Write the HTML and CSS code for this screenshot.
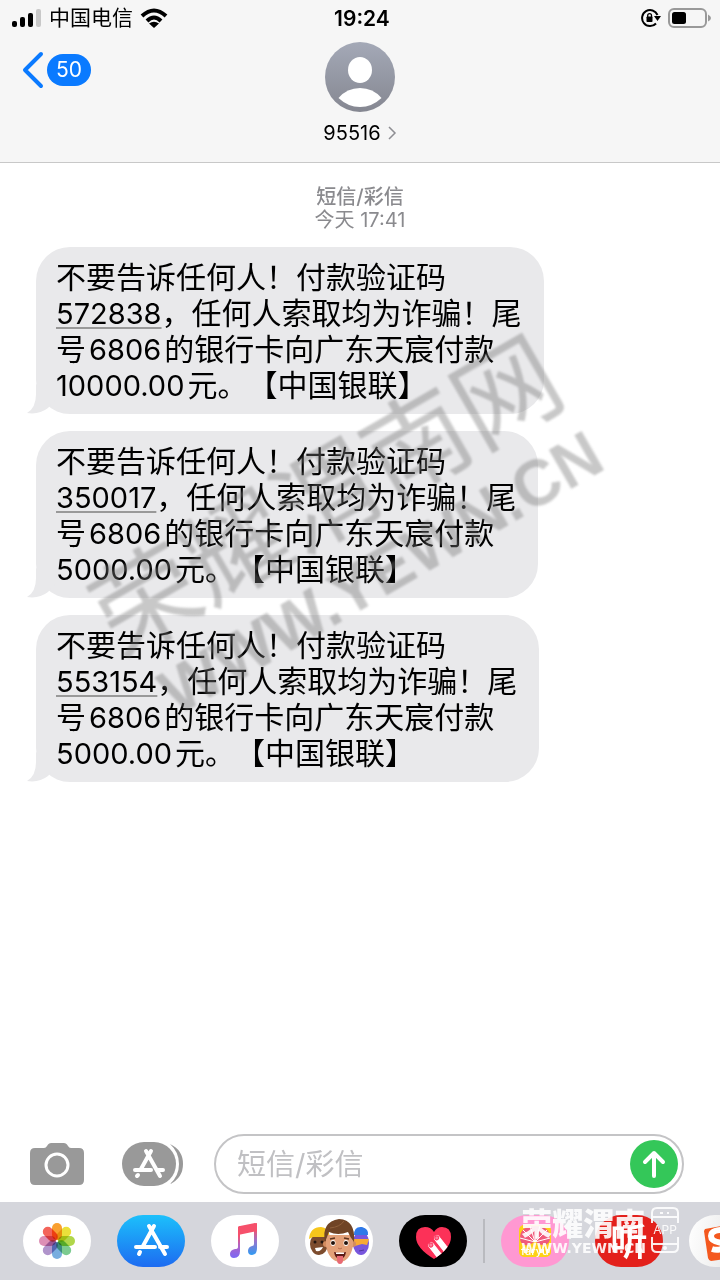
FILE: index.html
```html
<!DOCTYPE html>
<html lang="zh-CN">
<head>
    <meta charset="UTF-8">
    <meta name="viewport" content="width=device-width, initial-scale=1.0">
    <title>95516</title>
    <link rel="stylesheet" href="styles.css">
</head>
<body>
    <div class="screen">
        <header class="header">
            <!-- 状态栏 -->
            <div class="status-bar">
                <div class="status-left">
                    <svg class="signal" width="30" height="20" viewBox="0 0 30 20">
                        <rect x="0" y="13" width="5" height="6" rx="2"/>
                        <rect x="8" y="9" width="5" height="10" rx="2"/>
                        <rect x="16" y="5" width="5" height="14" rx="2"/>
                        <rect x="24" y="1" width="5" height="18" rx="2" fill="#c8c8c8"/>
                    </svg>
                    <span class="carrier">中国电信</span>
                    <svg width="28" height="20" viewBox="0 0 28 20" fill="none" stroke="#000" stroke-width="4">
                        <path d="M2 8Q14-3 26 8"/>
                        <path d="M7 13Q14 6 21 13"/>
                        <path d="M14 20L9 15.500Q14 12 19 15.500Z" fill="#000" stroke="none"/>
                    </svg>
                </div>
                <div class="clock">19:24</div>
                <div class="status-right">
                    <svg width="20" height="20" viewBox="0 0 20 20">
                        <path d="M15 15.500A8 8 0 1 1 16.500 7" fill="none" stroke="#000" stroke-width="2"/>
                        <path d="M13 8H20L16.500 13Z"/>
                        <rect x="5.500" y="8.500" width="6" height="5.500" rx="0.800"/>
                        <path d="M6.700 9V7.500a1.900 1.900 0 0 1 3.800 0V9" fill="none" stroke="#000" stroke-width="1.300"/>
                    </svg>
                    <svg width="44" height="20" viewBox="0 0 44 20">
                        <rect x="1" y="1" width="37" height="18" rx="5" fill="none" stroke="#999" stroke-width="2"/>
                        <rect x="4" y="4" width="14" height="12" rx="2.500"/>
                        <path d="M40 6.500Q43 8 43 10T40 13.500Z" fill="#999"/>
                    </svg>
                </div>
            </div>

            <!-- 导航栏 -->
            <nav class="nav-bar">
                <a class="back" href="#">
                    <svg width="22" height="38" viewBox="0 0 22 38" fill="none" stroke="#0a7aff" stroke-width="4" stroke-linecap="round" stroke-linejoin="round">
                        <path d="M19 3L3 19L19 35"/>
                    </svg>
                    <span class="unread">50</span>
                </a>
                <a class="contact" href="#">
                    <svg width="70" height="70" viewBox="0 0 70 70">
                        <defs>
                            <linearGradient id="avatar" x1="0" y1="0" x2="0" y2="1">
                                <stop offset="0" stop-color="#a4a9b7"/>
                                <stop offset="1" stop-color="#858791"/>
                            </linearGradient>
                        </defs>
                        <circle cx="35" cy="35" r="35" fill="url(#avatar)"/>
                        <ellipse cx="35" cy="28" rx="12" ry="13" fill="#fff"/>
                        <path d="M13.500 56Q22 46 35 46T56.500 56Q47 65 35 65T13.500 56Z" fill="#fff"/>
                    </svg>
                    <span class="contact-name">95516
                        <svg width="10" height="16" viewBox="0 0 10 16" fill="none" stroke="#8e8e93" stroke-width="1.500">
                            <path d="M2 2L8 8L2 14"/>
                        </svg>
                    </span>
                </a>
            </nav>
        </header>

        <!-- 短信内容 -->
        <main class="messages">
            <div class="timestamp">
                <div class="kind">短信/彩信</div>
                <div>今天 <span class="time">17:41</span></div>
            </div>
            <p class="bubble">
                不要告诉任何人！付款验证码<br>
                <a class="code" href="#">572838</a>，任何人索取均为诈骗！尾<br>
                号<span class="num">6806</span>的银行卡向广东天宸付款<br>
                <span class="num amount">10000.00</span>元。【中国银联】
            </p>
            <p class="bubble">
                不要告诉任何人！付款验证码<br>
                <a class="code" href="#">350017</a>，任何人索取均为诈骗！尾<br>
                号<span class="num">6806</span>的银行卡向广东天宸付款<br>
                <span class="num amount">5000.00</span>元。【中国银联】
            </p>
            <p class="bubble">
                不要告诉任何人！付款验证码<br>
                <a class="code" href="#">553154</a>，任何人索取均为诈骗！尾<br>
                号<span class="num">6806</span>的银行卡向广东天宸付款<br>
                <span class="num amount">5000.00</span>元。【中国银联】
            </p>
            <!-- 斜向水印 -->
            <div class="watermark">
                <div class="watermark-name">荣耀渭南网</div>
                <div class="watermark-url">WWW.YEWN.CN</div>
            </div>
        </main>

        <!-- 输入栏 -->
        <form class="compose">
            <button class="icon-button" type="button" aria-label="相机">
                <svg width="54" height="44" viewBox="0 0 54 44">
                    <path d="M5 6H14Q16 6 17 4L18 2.500Q19 1 21 1H34Q36 1 37 2.500L38 4Q39 6 41 6H49Q54 6 54 11V38Q54 43 49 43H5Q0 43 0 38V11Q0 6 5 6Z" fill="#999"/>
                    <circle cx="27" cy="23" r="11" fill="none" stroke="#fff" stroke-width="3"/>
                </svg>
            </button>
            <button class="icon-button" type="button" aria-label="应用">
                <svg width="61" height="44" viewBox="0 0 61 44">
                    <path d="M48 2Q61 8 61 22T48 42Q57 34 57 22T48 2Z" fill="#999"/>
                    <rect width="54" height="44" rx="22" fill="#999"/>
                    <g fill="none" stroke="#fff" stroke-width="4" stroke-linecap="round">
                        <path d="M24 9L38 34M29 9L19 27M13 28H29M36 28H41M16 33L15 34"/>
                    </g>
                </svg>
            </button>
            <div class="field">
                <input type="text" placeholder="短信/彩信" aria-label="短信/彩信">
                <button class="send" type="button" aria-label="发送">
                    <svg width="24" height="28" viewBox="0 0 24 28" fill="none" stroke="#fff" stroke-width="4" stroke-linecap="round" stroke-linejoin="round">
                        <path d="M12 26V3M3 12L12 3L21 12"/>
                    </svg>
                </button>
            </div>
        </form>

        <!-- 应用抽屉 -->
        <div class="drawer">
            <button class="app" aria-label="照片">
                <svg width="68" height="52" viewBox="0 0 68 52">
                    <g class="petals" transform="translate(34 26)">
                        <rect x="-5" y="-18" width="10" height="17" rx="5" fill="#f9a030"/>
                        <rect x="-5" y="-18" width="10" height="17" rx="5" fill="#ebe03a" transform="rotate(45)"/>
                        <rect x="-5" y="-18" width="10" height="17" rx="5" fill="#b0d64a" transform="rotate(90)"/>
                        <rect x="-5" y="-18" width="10" height="17" rx="5" fill="#7ccb90" transform="rotate(135)"/>
                        <rect x="-5" y="-18" width="10" height="17" rx="5" fill="#78addf" transform="rotate(180)"/>
                        <rect x="-5" y="-18" width="10" height="17" rx="5" fill="#b094cb" transform="rotate(225)"/>
                        <rect x="-5" y="-18" width="10" height="17" rx="5" fill="#dd8fb5" transform="rotate(270)"/>
                        <rect x="-5" y="-18" width="10" height="17" rx="5" fill="#f3645a" transform="rotate(315)"/>
                    </g>
                </svg>
            </button>
            <button class="app app-store" aria-label="App Store">
                <svg width="68" height="52" viewBox="0 0 68 52" fill="none" stroke="#fff" stroke-width="4" stroke-linecap="round">
                    <path d="M32 11L48 39M37 11L26 31M19 32H38M43 32H50M23 37L22 39"/>
                </svg>
            </button>
            <button class="app" aria-label="音乐">
                <svg width="68" height="52" viewBox="0 0 68 52">
                    <defs>
                        <linearGradient id="note" x1="0" y1="0" x2="0" y2="1">
                            <stop offset="0.300" stop-color="#f6506b"/>
                            <stop offset="0.600" stop-color="#b163c4"/>
                            <stop offset="1" stop-color="#7b68f5"/>
                        </linearGradient>
                        <linearGradient id="note-right" x1="0" y1="0" x2="0" y2="1">
                            <stop offset="0.200" stop-color="#f6506b"/>
                            <stop offset="0.550" stop-color="#9b73cc"/>
                            <stop offset="1" stop-color="#2f9bf3"/>
                        </linearGradient>
                    </defs>
                    <path d="M27 12L29 11V36Q29 43 23 43Q19 43 19 39T24 34Q27 34 27 32Z" fill="url(#note)"/>
                    <path d="M43 9L46 8V33Q46 40 41 40Q37 40 37 36T41 31Q43 31 43 29Z" fill="url(#note-right)"/>
                    <path d="M27 13Q27 11 29 11L44 8Q46 8 46 10V16L27 20Z" fill="#f6506b"/>
                </svg>
            </button>
            <button class="app" aria-label="拟我表情">
                <svg width="68" height="52" viewBox="0 0 68 52">
                    <ellipse cx="14" cy="29" rx="9" ry="11" fill="#7d4c2e"/>
                    <path d="M4 24Q5 12 16 12Q23 12 25 22L8 22Z" fill="#f7c61b"/>
                    <circle cx="10" cy="27" r="1.500" fill="#221510"/>
                    <circle cx="17" cy="27" r="1.500" fill="#221510"/>
                    <path d="M10 33L18 32Q16 37 11 36Z" fill="#fff"/>
                    <ellipse cx="56" cy="28" rx="8" ry="12" fill="#7856dd"/>
                    <path d="M49 20Q49 11 57 12Q64 14 63 20Z" fill="#2f79e8"/>
                    <path d="M48 24L64 24L62 30L57 29L50 31Z" fill="#f8aa35"/>
                    <path d="M54 36L59 35" stroke="#5136a0"/>
                    <circle cx="21" cy="29" r="3" fill="#d38c60"/>
                    <circle cx="48" cy="29" r="3" fill="#d38c60"/>
                    <path d="M21 20H48V31Q45 46 35 47Q24 46 21 31Z" fill="#e3a078"/>
                    <path d="M20 27Q16 7 34 4Q51 5 49 27Q45 22 43 17Q33 21 24 17Z" fill="#704426"/>
                    <path d="M25 13Q35 12 39 6" fill="none" stroke="#90603c"/>
                    <path d="M25 24L30 23M39 23L44 24" stroke="#5a321d" stroke-width="1.500"/>
                    <ellipse cx="28" cy="28" rx="2.500" ry="3" fill="#fff"/>
                    <ellipse cx="41" cy="28" rx="2.500" ry="3" fill="#fff"/>
                    <circle cx="28" cy="28" r="2" fill="#23130b"/>
                    <circle cx="41" cy="28" r="2" fill="#23130b"/>
                    <path d="M33 33Q35 35 37 33" fill="none" stroke="#b96d4c"/>
                    <path d="M29 37Q35 39 41 37Q40 44 35 44T29 37Z" fill="#5b1a16"/>
                    <path d="M31 37.500H39V39H31Z" fill="#fff"/>
                    <path d="M32 41H38V45Q38 49 35 49T32 45Z" fill="#e86a73"/>
                </svg>
            </button>
            <button class="app app-touch" aria-label="Digital Touch">
                <svg width="68" height="52" viewBox="0 0 68 52">
                    <clipPath id="heart"><path d="M35 44Q17 33 17 22Q17 12 26 12Q32 12 35 17Q38 12 43 12Q52 12 52 22Q52 33 35 44Z"/></clipPath>
                    <g clip-path="url(#heart)">
                        <rect width="68" height="52" fill="#fc3158"/>
                        <g transform="rotate(-38 38 24)" fill="#fff" stroke="#fc3158">
                            <rect x="35" y="20" width="7" height="30" rx="3.500"/>
                            <rect x="26" y="22" width="7" height="28" rx="3.500"/>
                            <rect x="36.500" y="21" width="4" height="4" rx="2" fill="#ff7d9c"/>
                            <rect x="27.500" y="23" width="4" height="4" rx="2" fill="#ff7d9c"/>
                        </g>
                    </g>
                </svg>
            </button>
            <div class="divider"></div>
            <button class="app app-pink" aria-label="美图">
                <svg width="68" height="52" viewBox="0 0 68 52">
                    <rect x="18" y="10" width="32" height="32" rx="5" fill="#fdd116"/>
                    <path d="M19 23Q19 11 34 11T49 23Q49 30 42 30Q38 30 34 26Q29 31 24 30Q19 29 19 23Z" fill="#f05a7c"/>
                    <path d="M34 27L22 15M34 27L29 11M34 27L39 11M34 27L46 15M34 27L19 23M34 27L49 23" stroke="#fff"/>
                </svg>
                <span class="label-pink">faryu</span>
            </button>
            <button class="app app-red" aria-label="喜马拉雅">
                <span class="label-red">听</span>
            </button>
            <button class="app app-sogou" aria-label="搜狗">
                <svg width="68" height="52" viewBox="0 0 68 52">
                    <path d="M16 14L50 8V42L22 46Q20 46 19 43L15 16Z" fill="#f4581e"/>
                    <path d="M38 15Q22 14 22 21Q22 27 34 28Q38 30 34 33Q29 36 23 34" fill="none" stroke="#fff" stroke-width="6"/>
                </svg>
            </button>

            <!-- 右下角水印 -->
            <div class="badge">
                <div>
                    <div class="badge-name">荣耀渭南</div>
                    <div class="badge-url">WWW.YEWN.CN</div>
                </div>
                <div class="badge-phone">
                    <svg width="28" height="46" viewBox="0 0 28 46" fill="none" stroke="#fff" stroke-width="2">
                        <path d="M1 16V6Q1 1 6 1H22Q27 1 27 6V16M1 30V40Q1 45 6 45H22Q27 45 27 40V30M1 10H27M1 37H27M9 6H12M16 6H18"/>
                        <circle cx="14" cy="41" r="1"/>
                    </svg>
                    <span class="badge-app">APP</span>
                </div>
            </div>
        </div>
    </div>
</body>
</html>
```
FILE: styles.css
```css
* {
    box-sizing: border-box;
}

body {
    margin: 0;
    background: #fff;
    color: #000;
    font-family: Inter, "Noto Sans CJK SC", sans-serif;
    text-spacing-trim: space-all;
}

svg {
    display: block;
    flex-shrink: 0;
}

button {
    padding: 0;
    border: 0;
    background: none;
    font-family: inherit;
}

a {
    color: inherit;
    text-decoration: none;
}

.screen {
    display: flex;
    flex-direction: column;
    min-height: 100vh;
    overflow: hidden;
}

/* 顶部 */
.header {
    background: #f6f6f6;
    border-bottom: 1px solid #c8c8c8;
}

.status-bar {
    display: grid;
    grid-template-columns: 1fr auto 1fr;
    align-items: center;
    height: 36px;
    padding: 0 8px 0 12px;
}

.status-left, .status-right {
    display: flex;
    align-items: center;
    gap: 7px;
}

.status-right {
    justify-content: flex-end;
}

.carrier {
    font-size: 21px;
    line-height: 32px;
}

.clock {
    font-size: 21px;
    font-weight: 600;
}

.nav-bar {
    display: grid;
    grid-template-columns: 1fr auto 1fr;
    align-items: start;
    height: 126px;
    padding: 6px 22px 0;
}

.back {
    display: flex;
    align-items: center;
    gap: 3px;
    padding-top: 9px;
}

.unread {
    width: 44px;
    border-radius: 16px;
    background: #0a7aff;
    color: #fff;
    font-size: 21px;
    line-height: 32px;
    text-align: center;
}

.contact {
    display: flex;
    flex-direction: column;
    align-items: center;
    gap: 8px;
}

.contact-name {
    display: flex;
    align-items: center;
    gap: 6px;
    font-size: 20px;
    line-height: 26px;
}

/* 短信 */
.messages {
    position: relative;
    flex: 1;
    padding: 23px 36px;
}

.timestamp {
    margin-bottom: 15px;
    color: #8a8a8e;
    font-size: 20px;
    line-height: 23px;
    text-align: center;
}

.kind {
    font-weight: 500;
}

.bubble {
    position: relative;
    width: fit-content;
    margin: 0 0 17px;
    padding: 12px 22px 11px 20px;
    border-radius: 34px;
    background: #e9e9eb;
    font-size: 30px;
    line-height: 36px;
    white-space: nowrap;
}

/* 气泡尾巴 */
.bubble::before {
    content: "";
    position: absolute;
    left: -9px;
    bottom: 0;
    width: 30px;
    height: 30px;
    background: #e9e9eb;
    clip-path: path("M9 0V10Q9 24 0 29Q12 31 21 24L30 14Z");
}

.code, .num {
    font-size: 29px;
    line-height: 29px;
}

.code {
    text-decoration: underline;
    text-decoration-color: #999;
    text-decoration-thickness: 2px;
    text-underline-offset: 3px;
}

.num {
    margin: 0 3px;
}

.amount {
    margin-left: 0;
}

.watermark {
    position: absolute;
    top: 276px;
    left: 86px;
    color: #777;
    opacity: 0.4;
    filter: blur(1px);
    transform: rotate(-30deg);
    white-space: nowrap;
    pointer-events: none;
}

.watermark-name {
    font-size: 104px;
    font-weight: 400;
    line-height: 104px;
}

.watermark-url {
    margin: 6px 0 0 20px;
    font-family: "Liberation Sans", sans-serif;
    font-size: 64px;
    font-weight: bold;
    line-height: 72px;
}

/* 输入栏 */
.compose {
    display: flex;
    align-items: center;
    margin: 0;
    padding: 0 36px 8px 30px;
}

.icon-button {
    margin-right: 38px;
}

.icon-button + .field {
    margin-left: -7px;
}

.field {
    display: flex;
    flex: 1;
    align-items: center;
    min-width: 0;
    height: 60px;
    padding: 0 4px 0 21px;
    border: 2px solid #c4c4c6;
    border-radius: 30px;
}

.field input {
    flex: 1;
    min-width: 0;
    padding: 0;
    border: 0;
    outline: 0;
    background: none;
    font-family: inherit;
    font-size: 29px;
}

.field input::placeholder {
    color: #c0c0c3;
}

.send {
    display: flex;
    align-items: center;
    justify-content: center;
    width: 48px;
    height: 48px;
    border-radius: 50%;
    background: #34c759;
}

/* 应用抽屉 */
.drawer {
    position: relative;
    display: flex;
    gap: 26px;
    height: 78px;
    padding: 13px 0 0 23px;
    background: #d5d6dc;
    overflow: hidden;
}

.app {
    position: relative;
    flex: 0 0 68px;
    height: 52px;
    border-radius: 26px;
    background: #fff;
    overflow: hidden;
}

.petals rect {
    mix-blend-mode: multiply;
}

.app-store {
    background: linear-gradient(#1cc0fb, #1d6bf1);
}

.app-touch {
    background: #000;
}

.divider {
    flex: 0 0 2px;
    height: 44px;
    margin: 4px -10px;
    background: #b9babf;
}

.app-pink {
    background: #ff98d2;
}

.label-pink {
    position: absolute;
    left: 20px;
    bottom: 10px;
    color: #fff;
    font-size: 11px;
    font-weight: 500;
    line-height: 12px;
}

.app-red {
    background: #e3201b;
}

.label-red {
    color: #fff;
    font-size: 38px;
    font-weight: 500;
    line-height: 52px;
}

.app-sogou {
    background: linear-gradient(100deg, #fff, #ddd);
}

.badge {
    position: absolute;
    top: 5px;
    right: 41px;
    display: flex;
    gap: 5px;
    color: #fff;
    opacity: 0.9;
    pointer-events: none;
}

.badge-name {
    font-size: 31px;
    font-weight: 900;
    line-height: 34px;
}

.badge-url {
    font-family: "DejaVu Sans", sans-serif;
    font-size: 14px;
    font-weight: bold;
    line-height: 14px;
}

.badge-phone {
    position: relative;
}

.badge-app {
    position: absolute;
    top: 16px;
    left: 0;
    width: 28px;
    font-size: 12px;
    line-height: 14px;
    text-align: center;
}
```
